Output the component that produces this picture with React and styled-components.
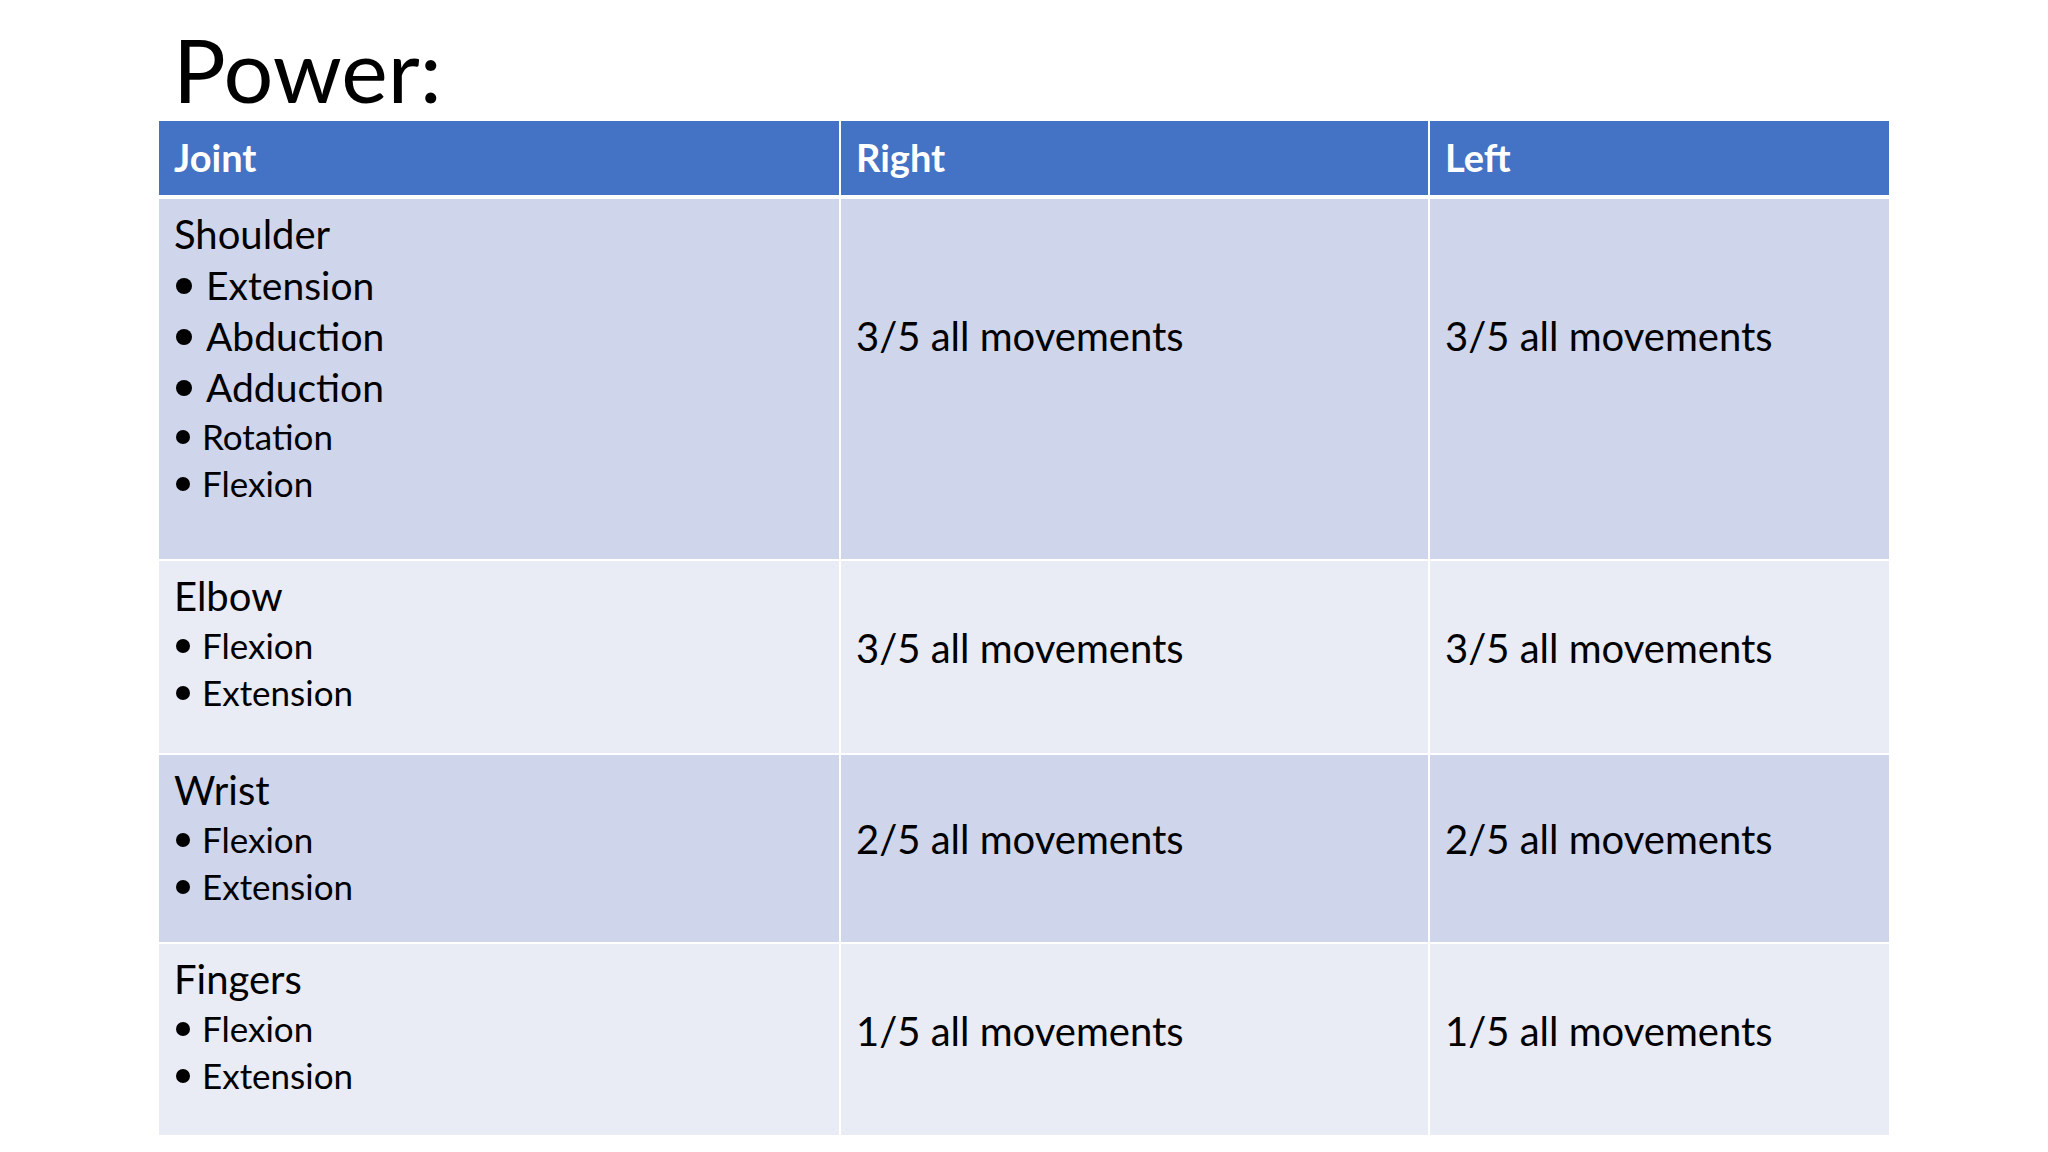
import React from "react";
import styled, { createGlobalStyle } from "styled-components";

const GlobalStyle = createGlobalStyle`
  html, body {
    margin: 0;
    padding: 0;
    background: #ffffff;
  }
  body {
    font-family: Lato, "Open Sans", "Liberation Sans", sans-serif;
    color: #000000;
  }
`;

const Slide = styled.div`
  width: 2048px;
  height: 1152px;
  box-sizing: border-box;
  padding: 0 159px;
  background: #ffffff;
  overflow: hidden;
`;

const Title = styled.h1`
  margin: 0;
  height: 121px;
  box-sizing: border-box;
  padding: 17px 0 0 14px;
  font-family: Lato, sans-serif;
  font-weight: 400;
  font-size: 88px;
  line-height: 1.2;
  color: #000000;
`;

const Table = styled.div`
  width: 1730px;
  display: flex;
  flex-direction: column;
  gap: 2px;
  background: #ffffff;
`;

const Row = styled.div`
  display: grid;
  grid-template-columns: 680px 587px 459px;
  column-gap: 2px;
  height: ${(p) => p.$height}px;
  margin-bottom: ${(p) => (p.$head ? 2 : 0)}px;
`;

const HeadCell = styled.div`
  background: #4472c4;
  display: flex;
  align-items: center;
  padding: 0 15px 2px 15px;
  font-family: Lato, sans-serif;
  font-weight: 700;
  font-size: 38px;
  color: #ffffff;
`;

const Cell = styled.div`
  background: ${(p) => (p.$dark ? "#cfd5ea" : "#e9ebf5")};
  padding: ${(p) => p.$top}px 15px 0 15px;
  box-sizing: border-box;
`;

const JointName = styled.div`
  font-size: 40px;
  line-height: 52px;
`;

const Item = styled.div`
  display: flex;
  align-items: center;
  font-size: ${(p) => (p.$big ? 39 : 35)}px;
  line-height: ${(p) => (p.$big ? 51 : 47)}px;
`;

const Dot = styled.span`
  flex: none;
  width: ${(p) => (p.$big ? 16 : 14)}px;
  height: ${(p) => (p.$big ? 16 : 14)}px;
  border-radius: 50%;
  background: #000000;
  margin: 0 ${(p) => (p.$big ? 14 : 12)}px 0 2px;
`;

const Value = styled.div`
  font-size: 40px;
  line-height: 52px;
  white-space: nowrap;
`;

const rows = [
  {
    joint: "Shoulder",
    items: [
      ["Extension", true],
      ["Abduction", true],
      ["Adduction", true],
      ["Rotation", false],
      ["Flexion", false],
    ],
    right: "3/5 all movements",
    left: "3/5 all movements",
    height: 360,
    valueTop: 111,
  },
  {
    joint: "Elbow",
    items: [
      ["Flexion", false],
      ["Extension", false],
    ],
    right: "3/5 all movements",
    left: "3/5 all movements",
    height: 192,
    valueTop: 61,
  },
  {
    joint: "Wrist",
    items: [
      ["Flexion", false],
      ["Extension", false],
    ],
    right: "2/5 all movements",
    left: "2/5 all movements",
    height: 187,
    valueTop: 58,
  },
  {
    joint: "Fingers",
    items: [
      ["Flexion", false],
      ["Extension", false],
    ],
    right: "1/5 all movements",
    left: "1/5 all movements",
    height: 191,
    valueTop: 61,
  },
];

export default function App() {
  return (
    <>
      <GlobalStyle />
      <Slide>
        <Title>Power:</Title>
        <Table>
          <Row $height={74} $head>
            <HeadCell>Joint</HeadCell>
            <HeadCell>Right</HeadCell>
            <HeadCell>Left</HeadCell>
          </Row>
          {rows.map((r, i) => {
            const dark = i % 2 === 0;
            return (
              <Row key={r.joint} $height={r.height}>
                <Cell $dark={dark} $top={9}>
                  <JointName>{r.joint}</JointName>
                  {r.items.map(([label, big]) => (
                    <Item key={label} $big={big}>
                      <Dot $big={big} />
                      {label}
                    </Item>
                  ))}
                </Cell>
                <Cell $dark={dark} $top={r.valueTop}>
                  <Value>{r.right}</Value>
                </Cell>
                <Cell $dark={dark} $top={r.valueTop}>
                  <Value>{r.left}</Value>
                </Cell>
              </Row>
            );
          })}
        </Table>
      </Slide>
    </>
  );
}
